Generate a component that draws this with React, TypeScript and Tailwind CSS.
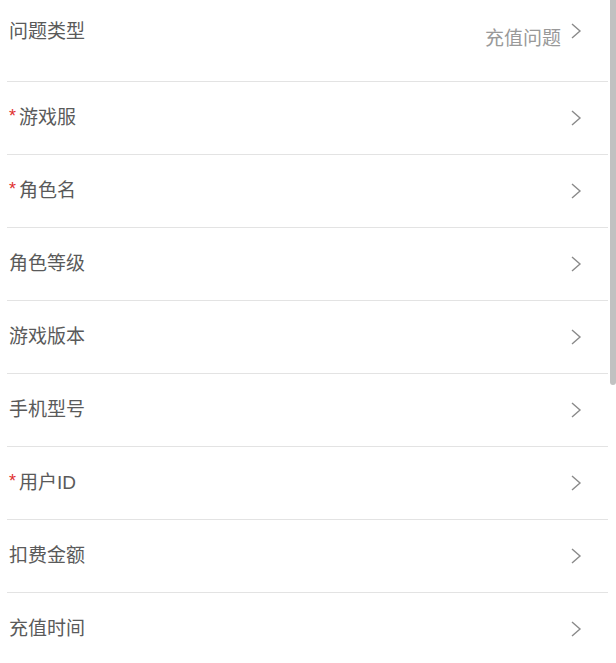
import React from 'react';

const campos = [
  { label: '游戏服', required: true },
  { label: '角色名', required: true },
  { label: '角色等级', required: false },
  { label: '游戏版本', required: false },
  { label: '手机型号', required: false },
  { label: '用户ID', required: true },
  { label: '扣费金额', required: false },
  { label: '充值时间', required: false },
];

const Seta = () => (
  <svg width="12" height="18" viewBox="0 0 12 18" fill="none" className="shrink-0">
    <path d="M2 2 L10 9 L2 16" stroke="#8a8a8a" strokeWidth="1.4" />
  </svg>
);

export default function App() {
  return (
    <div className="flex w-[616px] h-[663px] overflow-hidden bg-white font-['Liberation_Sans','Noto_Sans_CJK_SC',sans-serif]">
      <div className="flex-1 pl-[7px]">
        {/* tipo de problema */}
        <div className="h-[82px] border-b border-[#e3e3e3] flex items-start justify-between pl-[2px] pr-[26px]">
          <span className="text-[19px] text-[#5a5a5a] mt-[20px] leading-[24px]">问题类型</span>
          <div className="flex items-start gap-[9px] mt-[22px]">
            <span className="text-[19px] text-[#999] mt-[5px] leading-[24px]">充值问题</span>
            <Seta />
          </div>
        </div>

        {campos.map((c) => (
          <div
            key={c.label}
            className="h-[73px] border-b border-[#e3e3e3] flex items-center justify-between pl-[2px] pr-[26px]"
          >
            <span className="text-[19px] text-[#5a5a5a] leading-[24px] flex items-center">
              {c.required && <span className="text-[#e02f2f] text-[18px] mr-[3px] mt-[-4px]">*</span>}
              {c.label}
            </span>
            <Seta />
          </div>
        ))}
      </div>

      <div className="w-[8px] flex justify-end">
        <div className="w-[6px] h-[385px] bg-[#c1c1c1] rounded-b-[3px]" />
      </div>
    </div>
  );
}
